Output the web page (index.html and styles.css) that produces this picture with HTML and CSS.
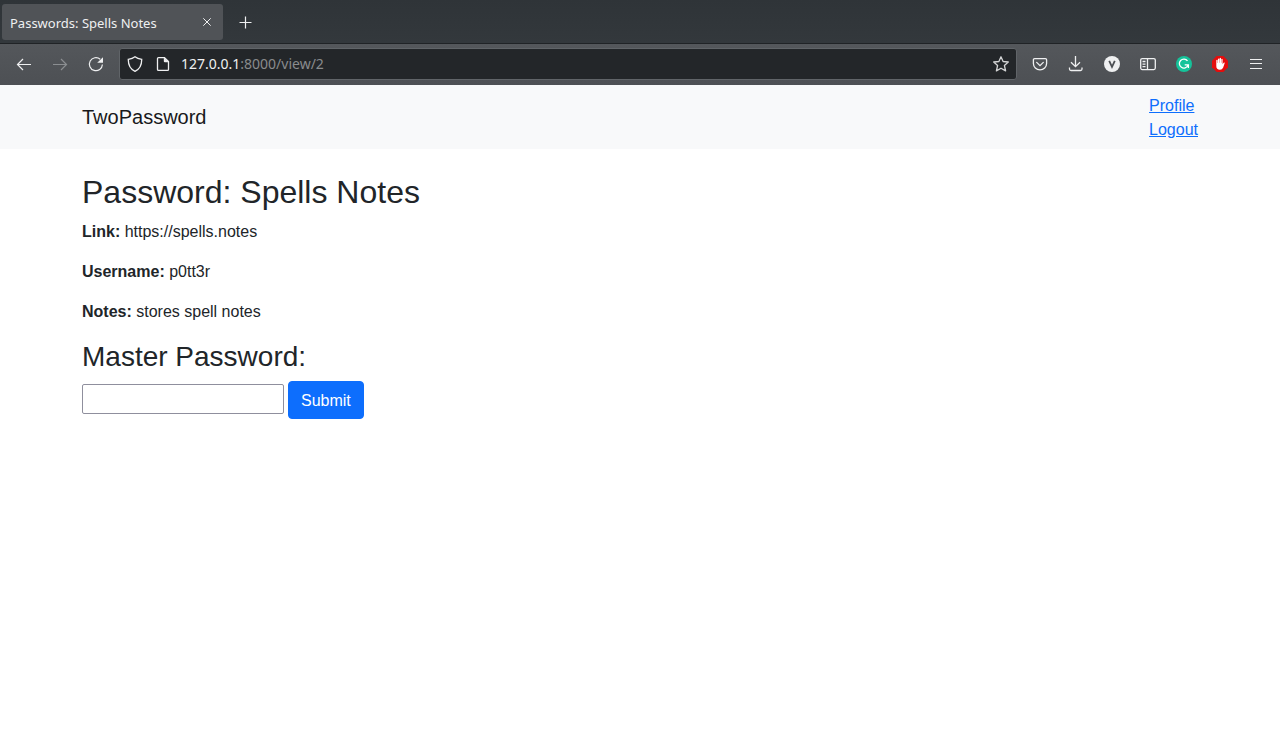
FILE: index.html
```html
<!DOCTYPE html>
<html lang="en">
<head>
<meta charset="utf-8">
<title>Passwords: Spells Notes</title>
<link rel="stylesheet" href="styles.css">
</head>
<body>
<header class="browser">
  <div class="tabs">
    <div class="tab">
      <span class="tab-title">Passwords: Spells Notes</span>
      <button class="tab-close" type="button" aria-label="Close tab"><svg class="icon" viewBox="0 0 16 16"><path d="M4.3 4.3l7.4 7.4M11.7 4.3l-7.4 7.4"/></svg></button>
    </div>
    <button class="tool" type="button" aria-label="New tab"><svg class="icon bold" viewBox="0 0 16 16"><path d="M7.5 2.500v12M1.500 8.500h12"/></svg></button>
  </div>
  <div class="toolbar">
    <button class="tool" type="button" aria-label="Back"><svg class="icon bold" viewBox="0 0 16 16"><path d="M15 8.5H1.5M7 3L1.5 8.5 7 14"/></svg></button>
    <button class="tool dim" type="button" aria-label="Forward" disabled><svg class="icon bold" viewBox="0 0 16 16"><path d="M1 8.5h13.500M9 3l5.500 5.500L9 14"/></svg></button>
    <button class="tool" type="button" aria-label="Reload"><svg class="icon bold" viewBox="0 0 16 16"><path d="M12.200 3.300A6.500 6.500 0 1 0 14.400 8.500"/><path class="solid" d="M15 1.200v5.600H9.200z"/></svg></button>
    <div class="address">
      <svg class="icon" viewBox="0 0 16 16"><path class="medium" d="M8 .8c1.800 1.400 4.200 2.200 6.700 2.600.1 5.700-2 9.800-6.700 11.900C3.300 13.200 1.200 9.100 1.300 3.400 3.800 3 6.200 2.200 8 .8z"/></svg>
      <svg class="icon" viewBox="0 0 16 16"><path class="medium" d="M3.500 1.600h6l4 4v7.800q0 1-1 1h-9q-1 0-1-1V2.600q0-1 1-1z"/><path class="solid" d="M8.800 1.200L13.900 6.300H9.800q-1 0-1-1z"/></svg>
      <div class="url" role="textbox" aria-label="Address"><span class="host">127.0.0.1</span>:8000/view/2</div>
      <svg class="icon star" viewBox="0 0 16 16"><path class="medium" stroke-linejoin="round" d="M8 .8l2.100 4.700 5.200.5-3.900 3.500 1.200 5.400L8 12.200l-4.600 2.700 1.200-5.400L.7 6l5.200-.5z"/></svg>
    </div>
    <button class="tool" type="button" aria-label="Save to Pocket"><svg class="icon" viewBox="0 0 16 16"><path class="medium" d="M2.600 2.600h10.800q1.200 0 1.200 1.200V7.500a6.600 6.400 0 0 1-13.200 0V3.800q0-1.200 1.200-1.200z"/><path class="medium" stroke-linecap="round" d="M4.700 6.400L8 9.600l3.300-3.200"/></svg></button>
    <button class="tool" type="button" aria-label="Downloads"><svg class="icon" viewBox="0 0 16 16"><path class="medium" d="M7.500 0v10.500M3 6.200l4.500 4.500L12 6.200M1.500 11.500v1.500q0 1.500 1.500 1.500h9.500q1.500 0 1.500-1.500v-1.500"/></svg></button>
    <button class="tool" type="button" aria-label="Vimium"><svg class="icon" viewBox="0 0 16 16"><circle class="badge-light" cx="8" cy="8" r="8"/><path class="letter" d="M5.200 4.900L8 10.800l2.800-5.900"/></svg></button>
    <button class="tool" type="button" aria-label="Sidebars"><svg class="icon" viewBox="0 0 16 16"><rect class="medium" x=".7" y="2.600" width="14.600" height="11" rx="1.500"/><path class="medium" d="M7.500 2.600v11M2.500 5.500h3M2.500 8.100h3M2.500 10.700h3"/></svg></button>
    <button class="tool" type="button" aria-label="Grammarly"><svg class="icon" viewBox="0 0 16 16"><circle class="badge-green" cx="8" cy="8" r="8"/><path class="medium white" d="M11.500 4.900A4.500 4.500 0 1 0 12 9.300M8.700 8.800h3.700v3.300"/></svg></button>
    <button class="tool" type="button" aria-label="AdBlock"><svg class="icon" viewBox="0 0 16 16"><path class="badge-red" d="M4.700 0h6.600L16 4.700v6.600L11.300 16H4.700L0 11.300V4.700z"/><path class="hand" d="M4.300 8V4.300q.7-1 1.300 0V7h.3V3q.8-1 1.400 0v3.800h.3V2.300q.8-1 1.400 0v4.500h.3V3.300q.8-.9 1.300 0V8.300l.5-.9q.9-1.500 1.700-.7L11.200 11.500Q10.200 13.800 8 13.800 4.300 13.800 4.300 10z"/></svg></button>
    <button class="tool" type="button" aria-label="Menu"><svg class="icon bold" viewBox="0 0 16 16"><path d="M2 3.500h12M2 7.500h12M2 12.500h12"/></svg></button>
  </div>
</header>
<nav class="navbar">
  <div class="container nav-row">
    <a class="brand" href="#">TwoPassword</a>
    <div class="links"><a href="#">Profile</a><a href="#">Logout</a></div>
  </div>
</nav>
<main class="container content">
  <h1 class="title">Password: Spells Notes</h1>
  <p class="field"><b>Link:</b> https://spells.notes</p>
  <p class="field"><b>Username:</b> p0tt3r</p>
  <p class="field"><b>Notes:</b> stores spell notes</p>
  <form class="unlock">
    <label class="subtitle" for="master">Master Password:</label>
    <div class="form-row">
      <input class="master" id="master" type="password">
      <button class="submit" type="submit">Submit</button>
    </div>
  </form>
</main>
</body>
</html>
```
FILE: styles.css
```css
* { box-sizing: border-box; }
body {
  margin: 0;
  background: #fff;
  color: #212529;
  font: 16px/24px "Liberation Sans", Arial, sans-serif;
}
.browser {
  color: #eff0f1;
  font-family: "Noto Sans", sans-serif;
}
.tabs {
  display: flex;
  align-items: center;
  height: 44px;
  padding: 0 2px;
  gap: 5px;
  background: linear-gradient(#2f3438, #33383c);
  border-bottom: 1px solid #202326;
}
.tab {
  display: flex;
  align-items: center;
  justify-content: space-between;
  width: 221px;
  height: 36px;
  padding: 0 8px;
  border-radius: 3px;
  background: #505357;
}
.tab-title {
  padding-top: 2px;
  font-size: 13px;
  line-height: 20px;
}
.tab-close, .tool {
  display: grid;
  place-items: center;
  padding: 0;
  border: 0;
  background: none;
  color: inherit;
}
.tool { width: 36px; height: 36px; }
.dim { color: #8b8e91; }
.icon {
  display: block;
  flex: none;
  width: 16px;
  height: 16px;
  fill: none;
  stroke: currentColor;
  stroke-width: 1;
}
.bold { stroke-width: 1.2; }
.medium { stroke-width: 1.3; }
.solid { fill: currentColor; stroke: none; }
.badge-light { fill: #eff0f1; stroke: none; }
.badge-green { fill: #15c39a; stroke: none; }
.badge-red { fill: #e40d0d; stroke: none; }
.letter { stroke: #4d5054; stroke-width: 1.8; }
.white { stroke: #fff; }
.hand { fill: #fff; stroke: none; }
.toolbar {
  display: flex;
  align-items: center;
  height: 41px;
  padding: 0 6px 1px;
  background: linear-gradient(#54575b, #4d5054);
}
.address {
  display: flex;
  flex: 1;
  align-items: center;
  gap: 12px;
  height: 32px;
  margin: 0 5px;
  padding: 0 7px;
  border: 1px solid #606468;
  border-radius: 3px;
  background: #232629;
}
.url {
  flex: 1;
  margin-left: -2px;
  color: #898b8d;
  font-size: 14px;
  line-height: 20px;
}
.host { color: #eff0f1; }
.star { color: #d3d4d5; }
.navbar { padding: 8px 0; background: #f8f9fa; }
.container {
  max-width: 1140px;
  margin: 0 auto;
  padding: 0 12px;
}
.nav-row {
  display: flex;
  align-items: center;
  justify-content: space-between;
}
.brand {
  color: #18191b;
  font-size: 20px;
  line-height: 30px;
  text-decoration: none;
}
.links {
  display: flex;
  flex-direction: column;
  height: 48px;
  padding-top: 1px;
}
.links a { color: #0d6efd; }
.content { padding-top: 24px; }
.title {
  margin: 0 0 9px;
  font-size: 32px;
  font-weight: 400;
  line-height: 38px;
}
.field { margin: 0 0 16px; }
.subtitle {
  display: block;
  margin-bottom: 7px;
  font-size: 28px;
  line-height: 34px;
}
.form-row { display: flex; align-items: center; gap: 4px; }
.master {
  width: 202px;
  height: 30px;
  margin-bottom: 2px;
  padding: 1px 2px;
  border: 1px solid #8f8f9d;
  border-radius: 2px;
  background: #fff;
  font: inherit;
}
.submit {
  padding: 7px 12px 5px;
  border: 1px solid #0d6efd;
  border-radius: 4px;
  background: #0d6efd;
  color: #fff;
  font: inherit;
}
```
